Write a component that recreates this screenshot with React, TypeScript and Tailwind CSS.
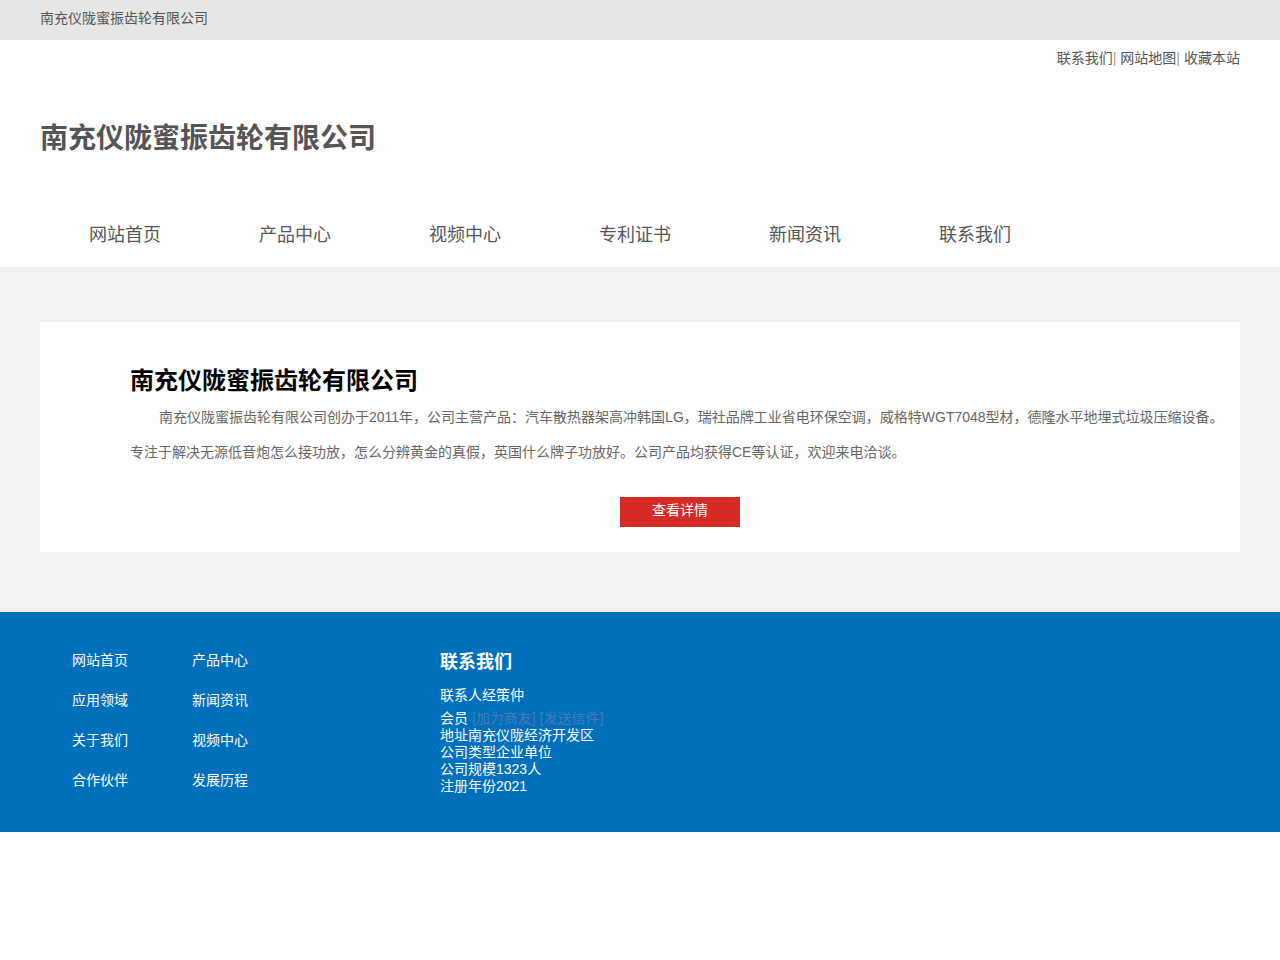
import React from "react";

const font = { fontFamily: '"Liberation Sans", "Noto Sans CJK SC", sans-serif' };

export default function App() {
  const nav = ["网站首页", "产品中心", "视频中心", "专利证书", "新闻资讯", "联系我们"];
  const footLinks = [
    ["网站首页", "产品中心"],
    ["应用领域", "新闻资讯"],
    ["关于我们", "视频中心"],
    ["合作伙伴", "发展历程"],
  ];
  return (
    <div style={font} className="w-[1280px] min-h-[960px] bg-white">
      <div className="h-10 bg-[#e6e6e6] px-10 flex items-center">
        <span className="text-[14px] text-[#555] leading-none -mt-[4px]">南充仪陇蜜振齿轮有限公司</span>
      </div>
      <div className="bg-white px-10 h-[227px]">
        <div className="flex justify-end pt-[10px] text-[14px] text-[#555] leading-[16px]">
          <span>联系我们</span><span className="text-[#999]">|</span>
          <span className="ml-1">网站地图</span><span className="text-[#999]">|</span>
          <span className="ml-1">收藏本站</span>
        </div>
        <h1 className="text-[28px] font-bold text-[#555] leading-[28px] mt-[59px]">南充仪陇蜜振齿轮有限公司</h1>
        <div className="flex mt-[73px]">
          {nav.map((n) => (
            <div key={n} className="w-[170px] text-center text-[18px] text-[#555] leading-[18px]">
              {n}
            </div>
          ))}
        </div>
      </div>
      <div className="bg-[#f1f1f1] px-10 pt-[55px] pb-[60px]">
        <div className="bg-white h-[230px] pl-[90px] pr-[10px] pt-[45px]">
          <h2 className="text-[24px] font-bold text-black leading-[28px]">南充仪陇蜜振齿轮有限公司</h2>
          <p className="text-[14px] text-[#666] leading-[35px] indent-[29px] mt-[5px] whitespace-nowrap">
            南充仪陇蜜振齿轮有限公司创办于2011年，公司主营产品：汽车散热器架高冲韩国LG，瑞社品牌工业省电环保空调，威格特WGT7048型材，德隆水平地埋式垃圾压缩设备。
          </p>
          <p className="text-[14px] text-[#666] leading-[35px] whitespace-nowrap">
            专注于解决无源低音炮怎么接功放，怎么分辨黄金的真假，英国什么牌子功放好。公司产品均获得CE等认证，欢迎来电洽谈。
          </p>
          <div className="flex justify-center mt-[27px]">
            <div className="w-[120px] h-[30px] bg-[#d52b24] text-white text-[14px] flex items-center justify-center pb-[3px]">
              查看详情
            </div>
          </div>
        </div>
      </div>
      <div className="bg-[#006fbc] h-[220px] flex pl-[72px] pt-[40px]">
        <div className="w-[368px] flex flex-col gap-[24px]">
          {footLinks.map(([a, b]) => (
            <div key={a} className="flex text-[14px] text-white leading-[16px]">
              <span className="w-[120px]">{a}</span>
              <span>{b}</span>
            </div>
          ))}
        </div>
        <div className="text-white">
          <h3 className="text-[18px] font-bold leading-[20px]">联系我们</h3>
          <div className="text-[14px] leading-[17px] mt-[15px]">
            <div className="mb-[6px]">联系人经策仲</div>
            <div>
              会员 <span className="text-[#4a7bb2]">[加为商友]</span>{" "}
              <span className="text-[#4a7bb2]">[发送信件]</span>
            </div>
            <div>地址南充仪陇经济开发区</div>
            <div>公司类型企业单位</div>
            <div>公司规模1323人</div>
            <div>注册年份2021</div>
          </div>
        </div>
      </div>
    </div>
  );
}
